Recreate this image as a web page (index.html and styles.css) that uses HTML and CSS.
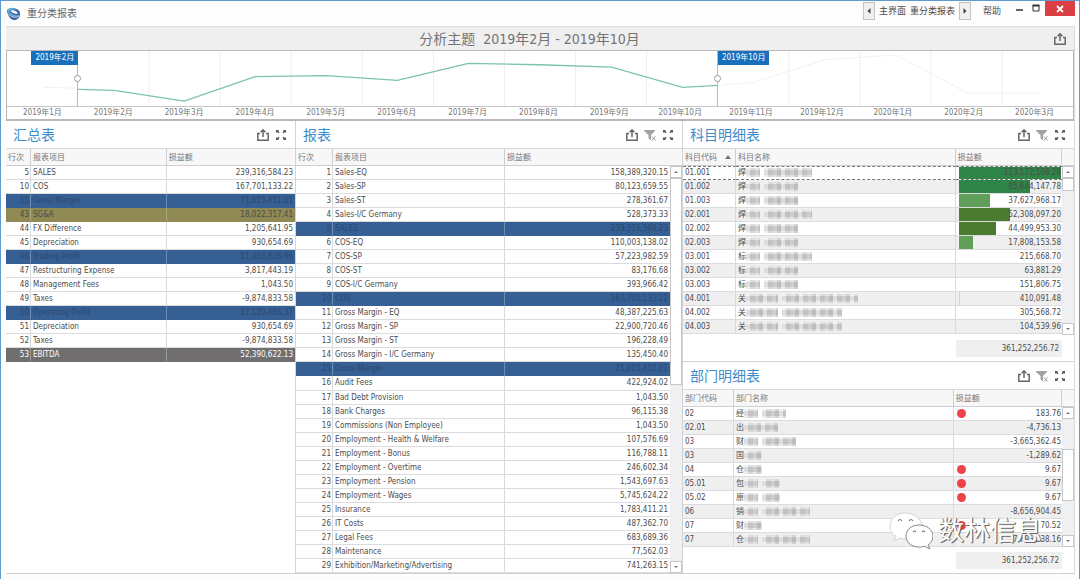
FILE: index.html
```html
<!DOCTYPE html>
<html lang="zh-CN">
<head>
<meta charset="utf-8">
<meta name="viewport" content="width=device-width, initial-scale=1">
<title>重分类报表</title>
<link rel="stylesheet" href="styles.css">
</head>
<body>
<svg class="defs" aria-hidden="true">
  <symbol id="share" viewBox="0 0 14 14"><path d="M4 5.5H1.8v6.7h10.4V5.5H10M7 9V2M4.6 4.3L7 1.8l2.4 2.5" fill="none" stroke="#666" stroke-width="1.5"/></symbol>
  <symbol id="filter" viewBox="0 0 14 14"><path d="M1 2h11v1L8 7v5.5L5.5 10.5V7L1 3z" fill="#a3a3a3"/><path d="M9 8.5l3.500 4M12.500 8.500l-3.500 4" stroke="#999" stroke-width="1" fill="none"/></symbol>
  <symbol id="expand" viewBox="0 0 14 14"><path d="M2 2h3L4.200 2.800 5.500 4.200 4.500 5.200 3 4 2 5zM12 2v3l-1-1-1.500 1.200-1-1L9.800 2.800 9 2zM2 12V9l1 1 1.500-1.200 1 1L4.200 11.200 5 12zM12 12H9l.8-.8L8.500 9.800l1-1L11 10l1-1z" fill="#555"/></symbol>
</svg>
<div class="window">
  <header class="titlebar">
    <svg class="logo" viewBox="0 0 16 16" aria-hidden="true"><path d="M1 5C3 1 10 1 14 5c2 4 1 8-4 10-5 0-8-4-9-10z" fill="#3f5aa4"/><path d="M1 4C4 1 9 1 12 4 8 3 5 4 4 6c2 3 6 5 11 3-2 4-11 4-14-5z" fill="#5faed2"/><path d="M5 5c3-1 6 0 8 3-3 1-6 0-8-3z" fill="#edf6fb"/><path d="M2 8c3 4 8 5 12 3" fill="none" stroke="#c6dcef"/></svg>
    <h1 class="app-title">重分类报表</h1>
    <nav class="tabs">
      <button class="tab-arrow" aria-label="上一个"><svg viewBox="0 0 6 6"><path d="M4.500 0v6L1.500 3z" fill="#444"/></svg></button>
      <a href="#">主界面</a><a href="#">重分类报表</a>
      <button class="tab-arrow last" aria-label="下一个"><svg viewBox="0 0 6 6"><path d="M1.500 0v6l3-3z" fill="#444"/></svg></button>
      <a class="help" href="#">帮助</a>
    </nav>
    <div class="winctl">
      <button class="ctl" aria-label="最小化"><svg viewBox="0 0 8 8"><path d="M0 6h7" stroke="#333" stroke-width="1.500"/></svg></button>
      <button class="ctl" aria-label="最大化"><svg viewBox="0 0 8 8"><path d="M1 1.500h6V7H1z" fill="none" stroke="#333"/><path d="M.5 1.500h7" stroke="#333" stroke-width="2"/></svg></button>
      <button class="close" aria-label="关闭"><svg viewBox="0 0 8 8"><path d="M1 1l6 6M7 1L1 7" stroke="#fff" stroke-width="1.800"/></svg></button>
    </div>
  </header>
  <main class="board">
    <div class="banner">
      <h2>分析主题&nbsp; 2019年2月 - 2019年10月</h2>
      <button class="icon" aria-label="导出"><svg><use href="#share"/></svg></button>
    </div>
    <section class="range">
      <div class="plot">
        <svg class="curve" viewBox="0 0 1065 56" preserveAspectRatio="none" aria-hidden="true">
          <path d="M142 0v56M213 0v56M284 0v56M355 0v56M426 0v56M497 0v56M568 0v56M639 0v56M781 0v56M852 0v56M923 0v56M994 0v56" stroke="#eeeef4" fill="none"/>
          <path d="M36 37L71 38" stroke="#f6edf2" fill="none"/>
          <path d="M710 35L746 32 817 9 888 4 960 43H1030" stroke="#f0f0f9" fill="none"/>
          <path d="M71 39L107 40 177 51 248 26 319 25 390 30 461 12.500 532 14 604 16.500 675 37 710 35" stroke="#7cc4a4" stroke-width="1.300" fill="none"/>
        </svg>
        <div class="handle start"><span class="flag">2019年2月</span><span class="knob"></span></div>
        <div class="handle end"><span class="flag">2019年10月</span><span class="knob"></span></div>
      </div>
      <div class="months"><span>2019年1月</span><span>2019年2月</span><span>2019年3月</span><span>2019年4月</span><span>2019年5月</span><span>2019年6月</span><span>2019年7月</span><span>2019年8月</span><span>2019年9月</span><span>2019年10月</span><span>2019年11月</span><span>2019年12月</span><span>2020年1月</span><span>2020年2月</span><span>2020年3月</span></div>
    </section>
    <div class="panels">
      <section class="panel">
        <div class="panel-head"><h3>汇总表</h3><button class="icon" aria-label="导出"><svg><use href="#share"/></svg></button><button class="icon" aria-label="展开"><svg><use href="#expand"/></svg></button></div>
        <div class="grid">
          <table class="summary">
            <colgroup><col class="c-no"><col class="c-item"><col></colgroup>
            <thead><tr><th>行次</th><th>报表项目</th><th>损益额</th></tr></thead>
            <tbody>
              <tr><td>5</td><td>SALES</td><td>239,316,584.23</td></tr>
              <tr><td>10</td><td>COS</td><td>167,701,133.22</td></tr>
              <tr class="blue"><td>15</td><td>Gross Margin</td><td>71,615,451.01</td></tr>
              <tr class="olive"><td>43</td><td>SG&amp;A</td><td>18,022,317.41</td></tr>
              <tr><td>44</td><td>FX Difference</td><td>1,205,641.95</td></tr>
              <tr><td>45</td><td>Depreciation</td><td>930,654.69</td></tr>
              <tr class="blue"><td>46</td><td>Trading Profit</td><td>51,456,836.96</td></tr>
              <tr><td>47</td><td>Restructuring Expense</td><td>3,817,443.19</td></tr>
              <tr><td>48</td><td>Management Fees</td><td>1,043.50</td></tr>
              <tr><td>49</td><td>Taxes</td><td>-9,874,833.58</td></tr>
              <tr class="blue"><td>50</td><td>Operating Profit</td><td>57,520,486.37</td></tr>
              <tr><td>51</td><td>Depreciation</td><td>930,654.69</td></tr>
              <tr><td>52</td><td>Taxes</td><td>-9,874,833.58</td></tr>
              <tr class="gray"><td>53</td><td>EBITDA</td><td>52,390,622.13</td></tr>
            </tbody>
          </table>
        </div>
      </section>
      <section class="panel">
        <div class="panel-head"><h3>报表</h3><button class="icon" aria-label="导出"><svg><use href="#share"/></svg></button><button class="icon" aria-label="清除筛选"><svg><use href="#filter"/></svg></button><button class="icon" aria-label="展开"><svg><use href="#expand"/></svg></button></div>
        <div class="grid">
          <table class="report">
            <colgroup><col class="c-no"><col class="c-item"><col></colgroup>
            <thead><tr><th>行次</th><th>报表项目</th><th>损益额</th></tr></thead>
            <tbody>
              <tr><td>1</td><td>Sales-EQ</td><td>158,389,320.15</td></tr>
              <tr><td>2</td><td>Sales-SP</td><td>80,123,659.55</td></tr>
              <tr><td>3</td><td>Sales-ST</td><td>278,361.67</td></tr>
              <tr><td>4</td><td>Sales-I/C Germany</td><td>528,373.33</td></tr>
              <tr class="blue"><td>5</td><td>SALES</td><td>239,316,584.23</td></tr>
              <tr><td>6</td><td>COS-EQ</td><td>110,003,138.02</td></tr>
              <tr><td>7</td><td>COS-SP</td><td>57,223,982.59</td></tr>
              <tr><td>8</td><td>COS-ST</td><td>83,176.68</td></tr>
              <tr><td>9</td><td>COS-I/C Germany</td><td>393,966.42</td></tr>
              <tr class="blue"><td>10</td><td>COS</td><td>167,701,133.22</td></tr>
              <tr><td>11</td><td>Gross Margin - EQ</td><td>48,387,225.63</td></tr>
              <tr><td>12</td><td>Gross Margin - SP</td><td>22,900,720.46</td></tr>
              <tr><td>13</td><td>Gross Margin - ST</td><td>196,228.49</td></tr>
              <tr><td>14</td><td>Gross Margin - I/C Germany</td><td>135,450.40</td></tr>
              <tr class="blue"><td>15</td><td>Gross Margin</td><td>71,615,451.01</td></tr>
              <tr><td>16</td><td>Audit Fees</td><td>422,924.02</td></tr>
              <tr><td>17</td><td>Bad Debt Provision</td><td>1,043.50</td></tr>
              <tr><td>18</td><td>Bank Charges</td><td>96,115.38</td></tr>
              <tr><td>19</td><td>Commissions (Non Employee)</td><td>1,043.50</td></tr>
              <tr><td>20</td><td>Employment - Health &amp; Welfare</td><td>107,576.69</td></tr>
              <tr><td>21</td><td>Employment - Bonus</td><td>116,788.11</td></tr>
              <tr><td>22</td><td>Employment - Overtime</td><td>246,602.34</td></tr>
              <tr><td>23</td><td>Employment - Pension</td><td>1,543,697.63</td></tr>
              <tr><td>24</td><td>Employment - Wages</td><td>5,745,624.22</td></tr>
              <tr><td>25</td><td>Insurance</td><td>1,783,411.21</td></tr>
              <tr><td>26</td><td>IT Costs</td><td>487,362.70</td></tr>
              <tr><td>27</td><td>Legal Fees</td><td>683,689.36</td></tr>
              <tr><td>28</td><td>Maintenance</td><td>77,562.03</td></tr>
              <tr><td>29</td><td>Exhibition/Marketing/Advertising</td><td>741,263.15</td></tr>
            </tbody>
          </table>
          <div class="scroll"><button aria-label="向上滚动"><i class="up"></i></button><div class="track"><div class="thumb half"></div></div><button aria-label="向下滚动"><i class="down"></i></button></div>
        </div>
      </section>
      <div class="stack">
        <section class="panel">
          <div class="panel-head"><h3>科目明细表</h3><button class="icon" aria-label="导出"><svg><use href="#share"/></svg></button><button class="icon" aria-label="清除筛选"><svg><use href="#filter"/></svg></button><button class="icon" aria-label="展开"><svg><use href="#expand"/></svg></button></div>
          <div class="grid">
            <table class="detail account">
              <colgroup><col class="c-code"><col class="c-name"><col></colgroup>
              <thead><tr><th><span class="sorted">科目代码<i class="sort"></i></span></th><th>科目名称</th><th>损益额</th></tr></thead>
              <tbody>
                <tr class="focus"><td>01.001</td><td>焊<s class="m cn"></s><s class="m w50"></s></td><td><div class="data"><b class="bar g1" style="width:100%"></b><span>123,172,108.28</span></div></td></tr>
                <tr><td>01.002</td><td>焊<s class="m cn"></s><s class="m w30"></s></td><td><div class="data"><b class="bar g1" style="width:70%"></b><span>85,644,147.78</span></div></td></tr>
                <tr><td>01.003</td><td>焊<s class="m cn"></s><s class="m w30"></s></td><td><div class="data"><b class="bar g2" style="width:31%"></b><span>37,627,968.17</span></div></td></tr>
                <tr><td>02.001</td><td>焊<s class="m cn"></s><s class="m w50"></s></td><td><div class="data"><b class="bar g3" style="width:50%"></b><span>52,308,097.20</span></div></td></tr>
                <tr><td>02.002</td><td>焊<s class="m cn"></s><s class="m w30"></s></td><td><div class="data"><b class="bar g3" style="width:36%"></b><span>44,499,953.30</span></div></td></tr>
                <tr><td>02.003</td><td>焊<s class="m cn"></s><s class="m w30"></s></td><td><div class="data"><b class="bar g2" style="width:14%"></b><span>17,808,153.58</span></div></td></tr>
                <tr><td>03.001</td><td>标<s class="m cn"></s><s class="m w50"></s></td><td>215,668.70</td></tr>
                <tr><td>03.002</td><td>标<s class="m cn"></s><s class="m w30"></s></td><td>63,881.29</td></tr>
                <tr><td>03.003</td><td>标<s class="m cn"></s><s class="m w30"></s></td><td>151,806.75</td></tr>
                <tr><td>04.001</td><td>关<s class="m long"></s><s class="m w75"></s></td><td><div class="data"><b class="bar g4" style="width:1%"></b><span>410,091.48</span></div></td></tr>
                <tr><td>04.002</td><td>关<s class="m long"></s><s class="m w60"></s></td><td>305,568.72</td></tr>
                <tr><td>04.003</td><td>关<s class="m long"></s><s class="m w60"></s></td><td>104,539.96</td></tr>
              </tbody>
            </table>
            <div class="scroll"><button aria-label="向上滚动"><i class="up"></i></button><div class="track"><div class="thumb tiny"></div></div><button aria-label="向下滚动"><i class="down"></i></button></div>
          </div>
          <div class="total"><output>361,252,256.72</output></div>
        </section>
        <section class="panel">
          <div class="panel-head"><h3>部门明细表</h3><button class="icon" aria-label="导出"><svg><use href="#share"/></svg></button><button class="icon" aria-label="清除筛选"><svg><use href="#filter"/></svg></button><button class="icon" aria-label="展开"><svg><use href="#expand"/></svg></button></div>
          <div class="grid">
            <table class="detail dept">
              <colgroup><col class="c-code"><col class="c-name"><col></colgroup>
              <thead><tr><th>部门代码</th><th>部门名称</th><th>损益额</th></tr></thead>
              <tbody>
                <tr><td>02</td><td>经<s class="m cn"></s><s class="m w20"></s></td><td><div class="mark"><i class="dot"></i><span>183.76</span></div></td></tr>
                <tr><td>02.01</td><td>出<s class="m w30 flush"></s></td><td>-4,736.13</td></tr>
                <tr><td>03</td><td>财<s class="m cn"></s><s class="m w30"></s></td><td>-3,665,362.45</td></tr>
                <tr><td>03</td><td>国<s class="m w15 flush"></s></td><td>-1,289.62</td></tr>
                <tr><td>04</td><td>仓<s class="m w15 flush"></s></td><td><div class="mark"><i class="dot"></i><span>9.67</span></div></td></tr>
                <tr><td>05.01</td><td>包<s class="m cn"></s><s class="m w15"></s></td><td><div class="mark"><i class="dot"></i><span>9.67</span></div></td></tr>
                <tr><td>05.02</td><td>原<s class="m cn"></s><s class="m w15"></s></td><td><div class="mark"><i class="dot"></i><span>9.67</span></div></td></tr>
                <tr><td>06</td><td>销<s class="m cn"></s><s class="m w50"></s></td><td>-8,656,904.45</td></tr>
                <tr><td>07</td><td>财<s class="m w15 flush"></s></td><td><div class="mark"><i class="dot"></i><span>70.52</span></div></td></tr>
                <tr><td>07</td><td>仓<s class="m cn"></s><s class="m w50"></s></td><td>-7,795,538.16</td></tr>
              </tbody>
            </table>
            <div class="scroll"><button aria-label="向上滚动"><i class="up"></i></button><div class="track"><div class="thumb mid"></div></div><button aria-label="向下滚动"><i class="down"></i></button></div>
          </div>
          <div class="total"><output>361,252,256.72</output></div>
        </section>
      </div>
    </div>
  </main>
  <div class="watermark">
    <svg viewBox="0 0 44 38" aria-hidden="true"><path d="M16 1C7 1 1 7 1 14c0 5 2 8 6 10l-2 5 6-3c3 1 5 1 7 1 8 0 15-6 15-13S25 1 16 1z" fill="#fff" stroke="#ccc" stroke-width=".8"/><path d="M30 13c-8 0-13 5-13 11s5 11 13 11c2 0 4 0 5-1l6 3-2-4c3-2 5-5 5-9 0-6-6-11-14-11z" fill="#fff" stroke="#888" stroke-width="1"/><path d="M9 9q2-3 4 0M20 9q2-3 4 0M24 20q2-2 3 0M33 20q2-2 3 0" fill="none" stroke="#777" stroke-width="1.200"/></svg>
    <span>数林信息</span>
  </div>
</div>
</body>
</html>
```
FILE: styles.css
```css
* { box-sizing: border-box; }
body {
  margin: 0;
  background: #fdfdfe;
  color: #4c4c4c;
  font: 8px/12px "DejaVu Sans Condensed", "Noto Sans", "Noto Sans CJK SC", sans-serif;
}
h1, h2, h3 { margin: 0; font-weight: 400; }
button { padding: 0; border: 0; background: none; font: inherit; }
button svg { display: block; }
a { color: inherit; text-decoration: none; }
s { text-decoration: none; }
.defs { display: none; }

.window {
  position: relative;
  display: flex;
  flex-direction: column;
  min-height: 100vh;
  padding: 0 4px 5px 5px;
  border: 1px solid #5f9bd0;
  border-bottom: 0;
}

/* title bar */
.titlebar { display: flex; height: 25px; align-items: flex-start; }
.logo { width: 15px; height: 15px; margin-top: 5px; }
.app-title { margin-left: 6px; font-size: 10px; line-height: 25px; color: #666; }
.tabs { display: flex; margin-left: auto; gap: 4px; font-size: 9px; line-height: 18px; padding-top: 1px; }
.tab-arrow { display: flex; align-items: center; justify-content: center; width: 12px; height: 18px; border: 1px solid #c4c4c8; background: #f0f0f1; }
.tab-arrow svg { width: 6px; height: 6px; }
.help { margin-left: 8px; }
.winctl { display: flex; gap: 8px; margin-left: 15px; }
.ctl { width: 8px; height: 14px; }
.ctl svg { width: 8px; height: 8px; }
.close { display: flex; align-items: center; justify-content: center; width: 30px; height: 15px; margin-left: -3px; background: #dc3f43; }
.close svg { width: 8px; height: 8px; }

/* board */
.board { display: flex; flex: 1; flex-direction: column; border: 1px solid #dcdcde; border-left: 0; border-bottom-color: #d0d0d2; }
.banner { display: flex; align-items: center; height: 23px; padding-right: 7px; background: #efeff0; }
.banner h2 { flex: 1; text-align: center; font-size: 14px; line-height: 22px; color: #747474; }
.icon svg { width: 14px; height: 14px; }

.range { border: 1px solid #b9b7b9; border-bottom-width: 2px; background: #fff; }
.plot { position: relative; height: 56px; border-bottom: 1px solid #c4c4c6; }
.curve { display: block; width: 100%; height: 55px; }
.handle { position: absolute; top: 0; bottom: 0; width: 1px; background: #b9b9bd; }
.handle.start { left: 6.6%; }
.handle.end { left: 66.6%; }
.flag { position: absolute; top: 0; padding: 0 4px; color: #fff; background: #1870bd; line-height: 14px; white-space: nowrap; }
.start .flag { right: 0; }
.end .flag { left: 1px; }
.knob { position: absolute; top: 24px; left: -3px; width: 7px; height: 7px; border: 1px solid #9a9a9e; border-radius: 50%; background: #fff; }
.months { display: grid; grid-template-columns: repeat(15, 1fr); padding-right: 3px; text-align: center; color: #777; }

/* panels */
.panels { display: grid; flex: 1; grid-template-columns: 290fr 387fr 391fr; }
.stack { display: grid; grid-template-rows: 240fr 212fr; min-width: 0; }
.panel { display: flex; flex-direction: column; min-width: 0; background: #fff; border-right: 1px solid #d4d4d6; }
.stack .panel { border-right: 0; }
.stack .panel + .panel { border-top: 1px solid #d4d4d6; }
.panel-head { display: flex; align-items: center; gap: 4px; height: 27px; padding: 0 7px; }
.panel-head h3 { margin-right: auto; font-size: 14px; line-height: 24px; color: #3c8ccc; }
.grid { display: flex; flex: 1; align-items: flex-start; border-top: 1px solid #d9d9dc; }

table { flex: 1; width: 100%; min-width: 0; border-collapse: separate; border-spacing: 0; table-layout: fixed; }
th { height: 17px; padding: 0 2px; border-right: 1px solid #cfcfd1; border-bottom: 1px solid #cfcfd1; background: #f7f7f8; color: #777; font-weight: 400; text-align: left; line-height: 15px; }
td { height: 14px; padding: 0 2px; border-right: 1px solid #dadadc; border-bottom: 1px solid #dcdcde; line-height: 13px; white-space: nowrap; }
th:last-child, td:last-child { border-right: 0; }
td:last-child { text-align: right; }
.summary td:first-child, .report td:first-child { padding-right: 1px; text-align: right; }
.summary .c-no { width: 25px; }
.summary .c-item { width: 47%; }
.report { align-self: stretch; }
.report .c-no { width: 37px; }
.report .c-item { width: 46%; }
.blue td { background: #365f93; border-color: #365f93; border-right-color: #6f8db2; color: #2a4a72; }
.olive td { background: #8f8953; border-color: #8f8953; border-right-color: #aaa67e; }
.gray td { background: #716e70; border-color: #716e70; border-right-color: #999; color: #fff; }

.detail tbody tr:nth-child(even) { background: #efeff0; }
.detail th:last-child { border-right: 1px solid #cfcfd1; }
.account .c-code { width: 53px; }
.dept .c-code { width: 51px; }
.detail .c-name { width: 58%; }
.detail td:last-child { padding: 0 1px 0 3px; }
.focus td { border-top: 1px dashed #777; border-bottom: 1px dashed #777; line-height: 12px; }
.sorted { display: flex; align-items: center; justify-content: space-between; padding-right: 2px; }
.sort { border: 3px solid transparent; border-top: 0; border-bottom: 4px solid #777; }
.data { display: grid; }
.data > * { grid-area: 1 / 1; }
.bar { height: 13px; }
.focus .bar { height: 12px; }
.g1 { background: #2e8547; }
.g2 { background: #5f9f5a; }
.g3 { background: #4a7b31; }
.g4 { background: #d3d8c4; }
.mark { display: flex; align-items: center; justify-content: space-between; }
.dot { width: 9px; height: 9px; border-radius: 50%; background: #ea4348; }

/* masked names */
.m {
  display: inline-block;
  height: 9px;
  margin-left: 4px;
  vertical-align: middle;
  background:
    repeating-linear-gradient(90deg, #fff6 0 4px, #aaa3 4px 9px, #ddd4 9px 13px, #9994 13px 17px),
    linear-gradient(#eaeaea 0 2px, #c8c8c8 2px 7px, #e4e4e4 7px);
}
.cn { width: 14px; margin-left: 0; }
.long { width: 32px; margin-left: 0; }
.flush { margin-left: 0; }
.w15 { width: 18px; }
.w20 { width: 24px; }
.w30 { width: 34px; }
.w50 { width: 48px; }
.w60 { width: 60px; }
.w75 { width: 76px; }

/* scroll bars */
.scroll { display: flex; flex: none; align-self: stretch; flex-direction: column; width: 12px; padding-top: 17px; background: linear-gradient(#f7f7f8 0 16px, #cfcfd1 16px 17px, #f0f0f2 17px); }
.scroll button { display: flex; align-items: center; justify-content: center; height: 12px; border: 1px solid #c6c6ca; background: #fff; }
.track { flex: 1; }
.thumb { border: 1px solid #c6c6ca; background: #fff; }
.thumb.half { height: 54%; }
.thumb.tiny { height: 13px; }
.thumb.mid { height: 52px; margin-top: 30px; }
.up, .down { border: 2px solid transparent; }
.up { border-top: 0; border-bottom-color: #777; }
.down { border-bottom: 0; border-top-color: #777; }

.total { display: flex; justify-content: flex-end; padding: 5px 12px 4px; }
.total output { width: 29%; padding-right: 3px; background: #efeff0; text-align: right; line-height: 17px; }

.watermark { position: absolute; right: 37px; bottom: 29px; display: flex; align-items: center; gap: 5px; font-size: 26px; line-height: 38px; color: #fff; pointer-events: none; }
.watermark svg { width: 44px; height: 38px; }
.watermark span { text-shadow: 1px 1px 0 #666, 1px 0 1px #777; }
```
